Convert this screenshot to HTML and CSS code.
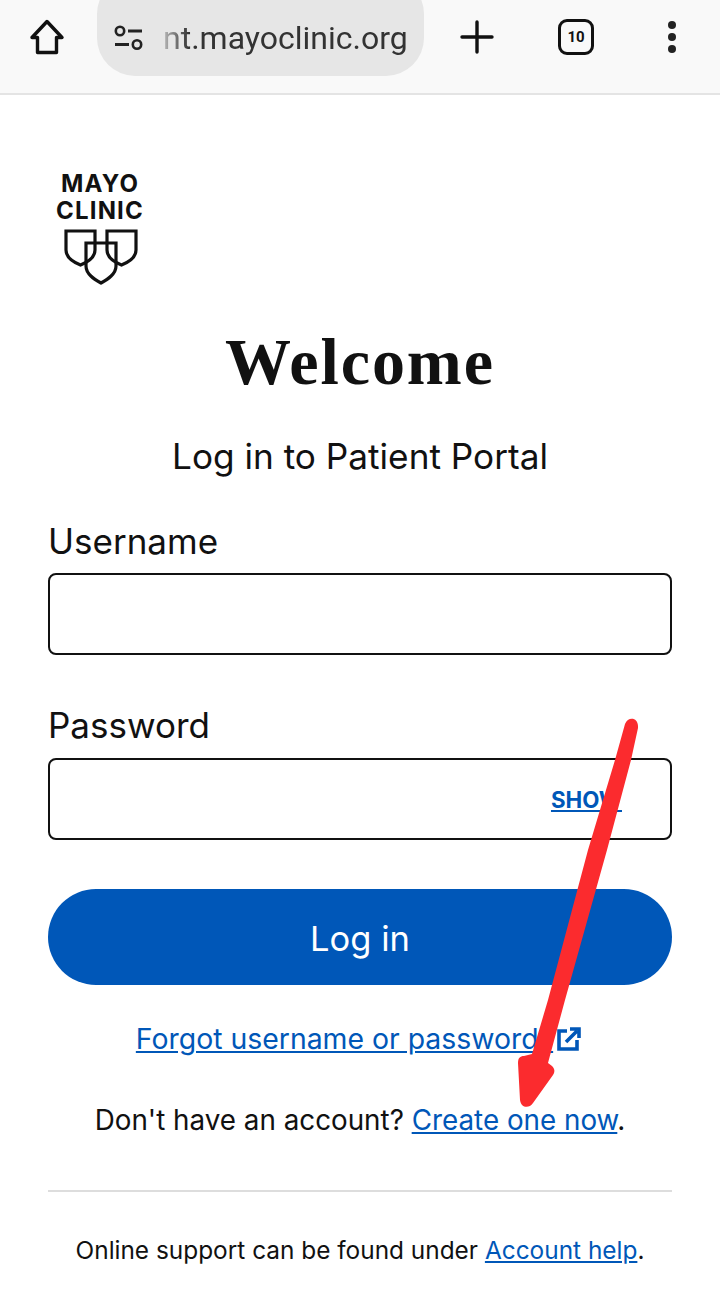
FILE: index.html
```html
<!DOCTYPE html>
<html lang="en">
<head>
  <meta charset="UTF-8" />
  <meta name="viewport" content="width=device-width, initial-scale=1.0">
  <title>Mayo Clinic - Log in</title>
  <link rel="stylesheet" href="styles.css">
</head>
<body>

  <div class="toolbar">
    <svg class="home-icon" width="38" height="38" viewBox="0 0 38 38">
      <path d="M4 19.5 19 3.5 34 19.5H28.5V34.5H9.5V19.5Z" fill="none" stroke="#111" stroke-width="3.4" stroke-linejoin="round"/>
    </svg>
    <div class="url-pill">
      <svg class="tune-icon" width="32" height="28" viewBox="0 0 32 28">
        <circle cx="7" cy="7" r="4.2" fill="none" stroke="#222" stroke-width="2.6"/>
        <path d="M15 7H29M2 20.500H16" stroke="#222" stroke-width="2.8" fill="none"/>
        <circle cx="24" cy="20.500" r="4.2" fill="none" stroke="#222" stroke-width="2.6"/>
      </svg>
      <div class="url-text">nt.mayoclinic.org</div>
    </div>
    <svg class="plus-icon" width="34" height="34" viewBox="0 0 34 34">
      <path d="M17 2V32M2 17H32" stroke="#111" stroke-width="3.4" stroke-linecap="round"/>
    </svg>
    <div class="tab-count">10</div>
    <svg class="dots-icon" width="12" height="34" viewBox="0 0 12 34">
      <circle cx="6" cy="5" r="4"/><circle cx="6" cy="17" r="4"/><circle cx="6" cy="29" r="4"/>
    </svg>
  </div>

  <div class="page">
    <div class="logo">
      <div class="logo-text">MAYO<br>CLINIC</div>
      <svg class="logo-shields" width="74" height="56" viewBox="0 0 74 56">
        <path d="M2 2H31V21C31 28 24 33 16.500 36 9 33 2 28 2 21Z" fill="none" stroke="#111" stroke-width="3.2"/>
        <path d="M43 2H72V21C72 28 65 33 57.500 36 50 33 43 28 43 21Z" fill="none" stroke="#111" stroke-width="3.2"/>
        <path d="M22 14H52V37C52 45 44 50 37 54 30 50 22 45 22 37Z" fill="none" stroke="#111" stroke-width="3.2"/>
      </svg>
    </div>

    <h1>Welcome</h1>
    <div class="subtitle">Log in to Patient Portal</div>

    <label class="field-label">Username</label>
    <div class="field"></div>

    <label class="field-label password-label">Password</label>
    <div class="field field-password"><a class="show-link" href="#">SHOW</a></div>

    <button class="login-button">Log in</button>

    <div class="forgot">
      <a href="#">Forgot username or password?</a>
      <svg class="external-icon" width="24" height="24" viewBox="0 0 24 24">
        <path d="M10 4H2V22H20V13" fill="none" stroke="#0057b8" stroke-width="3.6"/>
        <path d="M9 15 20 4M13 2H22V11" fill="none" stroke="#0057b8" stroke-width="3.6"/>
      </svg>
    </div>

    <div class="signup">Don't have an account? <a href="#">Create one now</a>.</div>

    <div class="divider"></div>

    <div class="support">Online support can be found under <a href="#">Account help</a>.</div>
  </div>

  <svg class="arrow" width="720" height="1296" viewBox="0 0 720 1296">
    <path d="M625 724C628 716 639 717 638 728L631 760 607 850 565 1000 548 1063 552 1066C555 1069 555 1072 553 1075L533 1103C529 1109 521 1108 520 1100L518 1063C518 1058 520 1056 524 1056L532 1054 548 1000 588 850 615 760Z" fill="#fb2b2e"/>
  </svg>

</body>
</html>
```

FILE: styles.css
```css
* {
  box-sizing: border-box;
}

body {
  margin: 0;
  height: 1296px;
  overflow: hidden;
  background: #fff;
  color: #111;
  font-family: 'Inter', sans-serif;
  position: relative;
}

a {
  color: #0057b8;
}

.toolbar {
  height: 95px;
  background: #f9f9f9;
  border-bottom: 2px solid #e4e4e4;
  display: flex;
  align-items: flex-start;
  overflow: hidden;
}

.home-icon {
  margin: 18px 0 0 28px;
}

.url-pill {
  width: 327px;
  height: 100px;
  margin: -24px 0 0 31px;
  padding: 24px 16px 0 16px;
  background: #e6e6e6;
  border-radius: 38px;
  display: flex;
  align-items: center;
  gap: 18px;
  flex-shrink: 0;
  overflow: hidden;
}

.tune-icon {
  flex-shrink: 0;
}

.url-text {
  font-family: 'Roboto', sans-serif;
  font-size: 32px;
  color: #333;
  white-space: nowrap;
  -webkit-mask-image: linear-gradient(to right, rgba(0,0,0,0.25), #000 26px);
  mask-image: linear-gradient(to right, rgba(0,0,0,0.25), #000 26px);
}

.plus-icon {
  margin: 20px 0 0 36px;
}

.tab-count {
  width: 36px;
  height: 36px;
  margin: 19px 0 0 64px;
  border: 3.5px solid #111;
  border-radius: 9px;
  font-family: 'Roboto', sans-serif;
  font-size: 15px;
  font-weight: 700;
  display: flex;
  align-items: center;
  justify-content: center;
}

.dots-icon {
  margin: 20px 0 0 72px;
  fill: #222;
}

.page {
  padding: 75px 48px 0;
}

.logo {
  width: 104px;
  display: flex;
  flex-direction: column;
  align-items: center;
}

.logo-text {
  font-weight: 700;
  font-size: 24px;
  line-height: 27px;
  letter-spacing: 1.2px;
  text-align: center;
}

.logo-shields {
  margin: 5px 0 0 2px;
}

h1 {
  font-family: 'Liberation Serif', serif;
  font-weight: 700;
  font-size: 66px;
  line-height: 72px;
  letter-spacing: 1.9px;
  text-align: center;
  margin: 41px 0 0;
}

.subtitle {
  font-size: 35.2px;
  line-height: 44px;
  text-align: center;
  margin-top: 36px;
}

.field-label {
  display: block;
  font-size: 35px;
  line-height: 44px;
  margin-top: 41px;
}

.password-label {
  margin-top: 48px;
}

.field {
  height: 82px;
  margin-top: 10px;
  border: 2px solid #111;
  border-radius: 8px;
}

.field.field-password {
  margin-top: 11px;
}

.field-password {
  display: flex;
  align-items: center;
  justify-content: flex-end;
  padding-right: 48px;
}

.show-link {
  font-size: 22.3px;
  font-weight: 700;
}

.login-button {
  display: block;
  width: 100%;
  height: 96px;
  margin-top: 49px;
  padding-top: 3px;
  border: none;
  border-radius: 48px;
  background: #0057b8;
  color: #fff;
  font-family: 'Inter', sans-serif;
  font-size: 34.5px;
}

.forgot {
  display: flex;
  justify-content: center;
  align-items: center;
  gap: 4px;
  margin-top: 34px;
  padding-right: 3px;
  font-size: 28.4px;
  line-height: 40px;
}

.signup {
  text-align: center;
  font-size: 27.8px;
  line-height: 40px;
  margin-top: 41px;
}

.divider {
  height: 2px;
  background: #ddd;
  margin-top: 50px;
}

.support {
  text-align: center;
  font-size: 24.4px;
  line-height: 36px;
  margin-top: 40px;
}

.arrow {
  position: absolute;
  top: 0;
  left: 0;
  pointer-events: none;
}
```
